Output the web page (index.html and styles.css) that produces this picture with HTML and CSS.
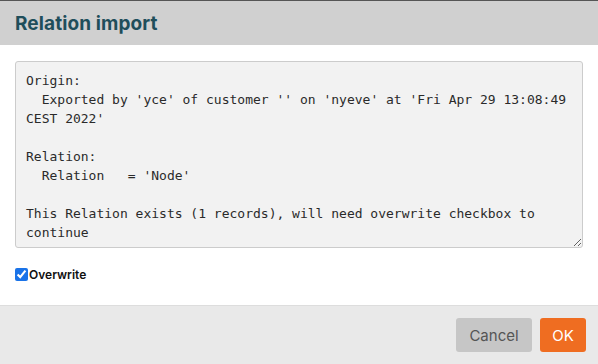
FILE: index.html
```html
<!DOCTYPE html>
<html lang="en">
<head>
    <meta charset="UTF-8">
    <title>Relation import</title>
    <link rel="stylesheet" href="styles.css">
</head>
<body>
    <div class="dialog">
        <div class="dialog-header">
            <h1 class="dialog-title">Relation import</h1>
        </div>
        <div class="dialog-body">
            <textarea class="report" readonly>Origin:
  Exported by 'yce' of customer '' on 'nyeve' at 'Fri Apr 29 13:08:49 CEST 2022'

Relation:
  Relation   = 'Node'

This Relation exists (1 records), will need overwrite checkbox to continue</textarea>
            <label class="check">
                <input type="checkbox" checked> Overwrite
            </label>
        </div>
        <div class="dialog-footer">
            <button class="btn btn-cancel">Cancel</button>
            <button class="btn btn-ok">OK</button>
        </div>
    </div>
</body>
</html>
```

FILE: styles.css
```css
body {
    margin: 0;
    padding: 0;
    background: #555555;
    font-family: 'Inter', sans-serif;
}

.dialog {
    margin-top: 1px;
    height: 363px;
    background: #ffffff;
    display: flex;
    flex-direction: column;
}

.dialog-header {
    height: 44px;
    background: #d0d0d0;
    display: flex;
    align-items: center;
    padding: 0 15px;
}

.dialog-title {
    margin: 0;
    font-size: 19px;
    font-weight: 700;
    color: #1f4e5b;
    letter-spacing: 0.1px;
}

.dialog-body {
    flex: 1;
    padding: 16px 15px 0;
}

.report {
    display: block;
    box-sizing: border-box;
    width: 100%;
    height: 187px;
    margin: 0;
    padding: 9px 10px;
    border: 1px solid #cccccc;
    border-radius: 3px;
    background: #f2f2f2;
    color: #2a2a2a;
    font-family: 'DejaVu Sans Mono', monospace;
    font-size: 13px;
    line-height: 19px;
    resize: vertical;
    overflow: hidden;
    outline: none;
}

.check {
    display: flex;
    align-items: center;
    margin-top: 19px;
    font-size: 12px;
    font-weight: 600;
    color: #111111;
}

.check input {
    width: 13px;
    height: 13px;
    margin: 0 1px 0 0;
    accent-color: #1a73e8;
}

.dialog-footer {
    height: 58px;
    border-top: 1px solid #dddddd;
    background: #e9e9e9;
    display: flex;
    justify-content: flex-end;
    align-items: center;
    gap: 8px;
    padding: 0 12px;
}

.btn {
    height: 34px;
    border: none;
    border-radius: 3px;
    font-family: 'Inter', sans-serif;
    font-size: 15px;
    cursor: pointer;
}

.btn-cancel {
    width: 76px;
    background: #c6c6c6;
    color: #555555;
}

.btn-ok {
    width: 46px;
    background: #ef6d21;
    color: #ffffff;
}
```
